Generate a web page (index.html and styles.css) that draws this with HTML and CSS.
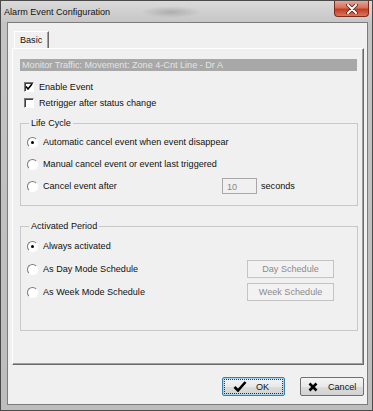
FILE: index.html
```html
<!DOCTYPE html>
<html>
<head>
<meta charset="utf-8">
<link rel="stylesheet" href="styles.css">
</head>
<body>
<div class="window">
  <div class="titlebar">
    <span class="title">Alarm Event Configuration</span>
    <div class="close">
      <svg width="14" height="10" viewBox="0 0 14 10"><path d="M3 1 L11 9 M11 1 L3 9" stroke="#5a1a10" stroke-width="3.6" stroke-linecap="round"/><path d="M3 1 L11 9 M11 1 L3 9" stroke="#fff" stroke-width="2" stroke-linecap="round"/></svg>
    </div>
  </div>
  <div class="client">
    <div class="tabs"><div class="tab">Basic</div></div>
    <div class="panel">
      <div class="header">Monitor Traffic: Movement: Zone 4-Cnt Line - Dr A</div>
      <div class="check-row"><span class="checkbox"><svg width="8" height="8" viewBox="0 0 8 8"><path d="M1 3.5 L3 6 L7 1" fill="none" stroke="#000" stroke-width="1.6"/></svg></span>Enable Event</div>
      <div class="check-row"><span class="checkbox"></span>Retrigger after status change</div>
      <fieldset class="group life">
        <legend>Life Cycle</legend>
        <div class="radio-row"><span class="radio on"></span><span>Automatic cancel event when event disappear</span></div>
        <div class="radio-row"><span class="radio"></span><span>Manual cancel event or event last triggered</span></div>
        <div class="radio-row"><span class="radio"></span><span class="after-label">Cancel event after</span><span class="num">10</span><span class="unit">seconds</span></div>
      </fieldset>
      <fieldset class="group period">
        <legend>Activated Period</legend>
        <div class="radio-row tall"><span class="radio on"></span><span class="grow">Always activated</span></div>
        <div class="radio-row tall"><span class="radio"></span><span class="grow">As Day Mode Schedule</span><span class="sched">Day Schedule</span></div>
        <div class="radio-row tall"><span class="radio"></span><span class="grow">As Week Mode Schedule</span><span class="sched">Week Schedule</span></div>
      </fieldset>
    </div>
    <div class="actions">
      <div class="btn default"><span class="focus"><svg width="14" height="11" viewBox="0 0 14 11"><path d="M1.5 6 L5 9.5 L12.5 1" fill="none" stroke="#000" stroke-width="2.6"/></svg><span class="btn-text ok">OK</span></span></div>
      <div class="btn"><svg width="10" height="10" viewBox="0 0 10 10"><path d="M1.5 1.5 L8.5 8.5 M8.5 1.5 L1.5 8.5" stroke="#000" stroke-width="2.6"/></svg><span class="btn-text">Cancel</span></div>
    </div>
  </div>
</div>
</body>
</html>
```

FILE: styles.css
```css
* { box-sizing: border-box; }
html, body { margin: 0; padding: 0; background: #fff; }
body { font-family: "Liberation Sans", Arial, sans-serif; font-size: 9.1px; color: #111; }

.window {
  width: 373px;
  height: 411px;
  border: 1px solid #4a4a4a;
  padding: 0 4px 5px 6px;
  background: linear-gradient(to bottom, #d6d6d6 0px, #c4c4c4 22px, #bdbdbd 100%);
  display: flex;
  flex-direction: column;
}

.titlebar {
  height: 21px;
  margin: 0 -4px 0 -6px;
  padding: 0 3px 0 3px;
  display: flex;
  justify-content: space-between;
  align-items: flex-start;
  background:
    radial-gradient(ellipse 30px 6px at 170px 11px, rgba(110,110,110,0.35), rgba(110,110,110,0)),
    linear-gradient(to bottom, #dadada, #c6c6c6);
}
.title { padding-top: 6px; font-size: 9.1px; color: #111; }

.close {
  width: 35px;
  height: 16px;
  margin-top: 0;
  border: 1px solid #7b2a1c;
  border-top: none;
  border-radius: 0 0 4px 4px;
  background: linear-gradient(to bottom, #e8a595 0%, #d5705a 45%, #c23d22 55%, #d9765b 100%);
  display: flex;
  align-items: center;
  justify-content: center;
}

.client {
  flex: 1;
  margin-top: 0;
  border: 1px solid #7c7c7c;
  background: #f0f0f0;
  padding: 8px 2px 0 4px;
  display: flex;
  flex-direction: column;
}

.tabs { height: 17px; display: flex; }
.tab {
  margin-left: 2px;
  width: 35px;
  height: 17px;
  border-left: 1px solid #fff;
  border-top: 1px solid #fff;
  border-right: 1px solid #6a6a6a;
  box-shadow: inset -1px 0 0 #a0a0a0;
  padding: 3px 0 0 5px;
  color: #111;
}

.panel {
  width: 352px;
  height: 317px;
  border-top: 1px solid #fff;
  border-left: 1px solid #fff;
  border-right: 1px solid #6a6a6a;
  border-bottom: 1px solid #6a6a6a;
  box-shadow: inset -1px -1px 0 #a0a0a0;
  padding-top: 10px;
  display: flex;
  flex-direction: column;
}

.header {
  margin-left: 7px;
  width: 337px;
  height: 12px;
  background: #a8a8a8;
  color: #e4e4e4;
  padding-left: 2px;
  line-height: 12px;
  white-space: nowrap;
}

.check-row {
  height: 16px;
  display: flex;
  align-items: center;
  padding-left: 11px;
}
.check-row:first-of-type { margin-top: 0; }
.header + .check-row { margin-top: 8px; }

.checkbox {
  width: 10px;
  height: 10px;
  margin-right: 5px;
  border: 1px solid;
  border-color: #7a7a7a #fff #fff #7a7a7a;
  box-shadow: inset 1px 1px 0 #404040;
  background: #fff;
  display: flex;
  align-items: center;
  justify-content: center;
}

.group {
  margin: 0 0 0 7px;
  padding: 0 0 0 6px;
  width: 338px;
  border: 1px solid #c8c8c8;
  min-width: 0;
}
.group legend {
  margin-left: 2px;
  padding: 0 2px;
  line-height: 12px;
  color: #111;
}
.life { margin-top: 6px; padding-bottom: 11px; }
.period { margin-top: 14px; padding-bottom: 29px; }

.radio-row {
  height: 16px;
  margin-top: 6px;
  display: flex;
  align-items: center;
}
.radio-row:first-of-type { margin-top: 5px; }
.radio-row.tall { height: 18px; margin-top: 5px; }

.radio {
  width: 11px;
  height: 11px;
  margin-right: 5px;
  border-radius: 50%;
  border: 1px solid;
  border-color: #7a7a7a #fff #fff #7a7a7a;
  background: #fff;
  display: flex;
  align-items: center;
  justify-content: center;
  flex: none;
}
.radio.on::after {
  content: "";
  width: 3px;
  height: 3px;
  border-radius: 50%;
  background: #000;
}

.after-label { width: 179px; }
.num {
  width: 35px;
  height: 16px;
  border: 1px solid #a8a8a8;
  background: #f0f0f0;
  color: #888;
  padding: 3px 0 0 4px;
}
.unit { margin-left: 4px; }

.grow { flex: 1; }
.sched {
  width: 87px;
  height: 18px;
  margin-right: 23px;
  border: 1px solid #c4c4c4;
  background: #f2f2f2;
  color: #8c8c8c;
  display: flex;
  align-items: center;
  justify-content: center;
}

.actions {
  margin-top: 12px;
  display: flex;
  justify-content: flex-end;
  gap: 15px;
  padding-right: 1px;
}
.btn {
  height: 19px;
  width: 64px;
  border: 1px solid #707070;
  border-radius: 2px;
  background: linear-gradient(to bottom, #f4f4f4 0%, #e9e9e9 50%, #dcdcdc 51%, #d2d2d2 100%);
  display: flex;
  align-items: center;
  padding-left: 7px;
  color: #111;
}
.btn-text { margin-left: 10px; }
.btn.default {
  width: 63px;
  border-color: #3c7fb1;
  box-shadow: inset 0 0 0 1px #a9d4ee;
  padding: 2px;
}
.focus {
  flex: 1;
  height: 100%;
  outline: 1px dotted #333;
  display: flex;
  align-items: center;
  padding-left: 8px;
}
.btn-text.ok { margin-left: 9px; }
```
